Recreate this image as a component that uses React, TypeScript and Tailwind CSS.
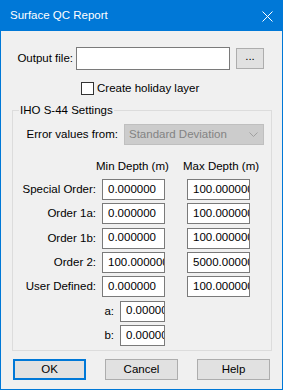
import React from 'react';

const font = { fontFamily: '"Liberation Sans", Arial, sans-serif' };

const rows: { label: string; min: string; max: string }[] = [
  { label: 'Special Order:', min: '0.000000', max: '100.000000' },
  { label: 'Order 1a:', min: '0.000000', max: '100.000000' },
  { label: 'Order 1b:', min: '0.000000', max: '100.000000' },
  { label: 'Order 2:', min: '100.000000', max: '5000.000000' },
  { label: 'User Defined:', min: '0.000000', max: '100.000000' },
];

const Field: React.FC<{ value: string; width: string }> = ({ value, width }) => (
  <div className={`${width} h-[21px] shrink-0 bg-white border border-[#7a7a7a] overflow-hidden whitespace-nowrap pl-[5px] flex items-center leading-none text-black`}>
    {value}
  </div>
);

const Button: React.FC<{ label: string; primary?: boolean }> = ({ label, primary }) => (
  <button
    className={`w-[73px] h-[21px] bg-[#e1e1e1] text-[11.5px] leading-none text-black flex items-center justify-center ${
      primary ? 'border-2 border-[#0078d7]' : 'border border-[#adadad]'
    }`}
  >
    {label}
  </button>
);

export default function App() {
  return (
    <div className="w-[283px] h-[390px] flex flex-col bg-[#f0f0f0] text-black select-none" style={font}>
      {/* Title bar */}
      <div className="h-[31px] shrink-0 bg-[#0078d7] flex items-center justify-between pl-[10px] pr-[10px]">
        <span className="text-white text-[11.5px] leading-none">Surface QC Report</span>
        <svg width="11" height="11" viewBox="0 0 11 11" className="mt-[1px]">
          <path d="M0.5 0.5 L10.5 10.5 M10.5 0.5 L0.5 10.5" stroke="#ffffff" strokeWidth="1" />
        </svg>
      </div>

      {/* Body */}
      <div className="flex-1 border-x border-b border-[#0078d7] pt-[16px] text-[11.5px] whitespace-nowrap">
        {/* Output file */}
        <div className="flex items-center h-[23px]">
          <span className="w-[72px] text-right">Output file:</span>
          <div className="ml-[3px] w-[154px] h-[23px] bg-white border border-[#7a7a7a]" />
          <button className="ml-[6px] w-[28px] h-[21px] bg-[#e1e1e1] border border-[#adadad] flex items-center justify-center leading-none pb-[3px]">
            ...
          </button>
        </div>

        {/* Holiday layer */}
        <div className="flex items-center mt-[12px] ml-[80px] h-[13px]">
          <div className="w-[13px] h-[13px] bg-white border border-[#333333]" />
          <span className="ml-[3px] leading-none">Create holiday layer</span>
        </div>

        {/* IHO settings */}
        <fieldset className="mt-[7px] ml-[11px] w-[260px] h-[249px] border border-[#dcdcdc]">
          <legend className="ml-[6px] px-[1px] leading-[16px]">IHO S-44 Settings</legend>

          <div className="flex items-center mt-[6px] h-[21px]">
            <span className="w-[105px] text-right">Error values from:</span>
            <div className="ml-[6px] w-[140px] h-[21px] bg-[#cccccc] border border-[#bfbfbf] flex items-center justify-between pl-[4px] pr-[5px] text-[#838383] leading-none">
              <span>Standard Deviation</span>
              <svg width="9" height="5" viewBox="0 0 9 5">
                <path d="M0.5 0.5 L4.5 4.5 L8.5 0.5" fill="none" stroke="#a0a0a0" strokeWidth="1" />
              </svg>
            </div>
          </div>

          <div className="flex mt-[13px] h-[16px] leading-[16px]">
            <span className="ml-[83px] w-[87px]">Min Depth (m)</span>
            <span>Max Depth (m)</span>
          </div>

          <div className="flex flex-col gap-[3.33px] mt-[5px]">
            {rows.map((r) => (
              <div key={r.label} className="flex items-center h-[21px]">
                <span className="w-[83px] text-right">{r.label}</span>
                <div className="ml-[6px]">
                  <Field value={r.min} width="w-[63px]" />
                </div>
                <div className="ml-[22px]">
                  <Field value={r.max} width="w-[63px]" />
                </div>
              </div>
            ))}
            {['a:', 'b:'].map((l) => (
              <div key={l} className="flex items-center h-[21px]">
                <span className="w-[101px] text-right">{l}</span>
                <div className="ml-[6px]">
                  <Field value="0.000000" width="w-[45px]" />
                </div>
              </div>
            ))}
          </div>
        </fieldset>

        {/* Buttons */}
        <div className="flex justify-between mt-[8px] ml-[12px] w-[257px]">
          <Button label="OK" primary />
          <Button label="Cancel" />
          <Button label="Help" />
        </div>
      </div>
    </div>
  );
}
